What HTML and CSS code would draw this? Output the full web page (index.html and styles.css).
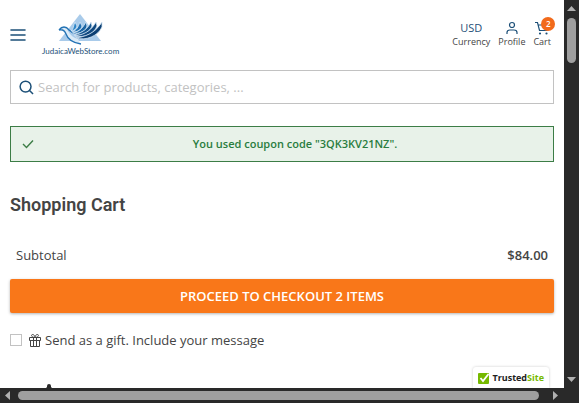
FILE: index.html
```html
<!DOCTYPE html>
<html lang="en">
<head>
    <meta charset="UTF-8">
    <meta name="viewport" content="width=device-width, initial-scale=1.0">
    <title>Shopping Cart</title>
    <link rel="stylesheet" href="styles.css">
</head>
<body>
    <div class="page">
        <header class="header">
            <button class="menu-toggle" type="button" aria-label="Menu">
                <svg width="16" height="12" viewBox="0 0 16 12"><path d="M1 1h14M1 6h14M1 11h14" stroke="#1d5078" stroke-width="1.600" stroke-linecap="round"/></svg>
            </button>
            <a class="logo" href="#">
                <svg width="46" height="31" viewBox="0 0 46 31">
                    <path d="M22 0L43 27H1z" fill="#a9cbea"/>
                    <path d="M1 15C4 12 8 13 10 17C12 21 16 24 20 25L22 29C14 28 10 24 8 19C7 16 4 15 1 15z" fill="#dcebf7"/>
                    <path d="M1 16C4 12 8 12 11 16C13 18 15 19 18 20M1 16C5 15 7 17 8 20C10 26 16 29 23 30" fill="none" stroke="#2272b4" stroke-width="1.300"/>
                    <g stroke="#d5e7f6" stroke-width=".8">
                        <path d="M17 8L19 12C18 15 17 16 13 17C16 15 15 12 17 8z" fill="#2f86c8"/>
                        <path d="M22 8L24 12C23 16 20 18 14 18C19 16 20 13 22 8z" fill="#2272b4"/>
                        <path d="M28 8L29 12C28 17 23 20 15 19C23 17 25 13 28 8z" fill="#1b65a3"/>
                        <path d="M33 8L34 12C32 18 25 22 16 21C26 18 30 14 33 8z" fill="#155690"/>
                        <path d="M38 8L39 12C36 20 27 24 17 22C29 20 34 15 38 8z" fill="#0f4880"/>
                        <path d="M44 8L44 13C40 22 28 27 18 24C32 22 39 16 44 8z" fill="#0b3f73"/>
                    </g>
                </svg>
                <span class="logo-text">JudaicaWebStore.com</span>
            </a>
            <nav class="tools">
                <a class="tool" href="#"><span class="tool-icon">USD</span>Currency</a>
                <a class="tool" href="#">
                    <span class="tool-icon"><svg width="12" height="14" viewBox="0 0 12 14"><circle cx="6" cy="4" r="2.500"/><path d="M1 13v-1.500C1 9.500 2.500 9 4 9h4c1.500 0 3 .5 3 2.500V13"/></svg></span>
                    Profile
                </a>
                <a class="tool" href="#">
                    <span class="tool-icon"><svg width="14" height="14" viewBox="0 0 14 14"><path d="M0 1.500h2.500l2 8h7.500l1.500-5.500H3.500"/><circle cx="5" cy="12.500" r=".5"/><circle cx="11.500" cy="12.500" r=".5"/></svg><span class="badge">2</span></span>
                    Cart
                </a>
            </nav>
        </header>

        <main class="content">
            <form class="search">
                <svg width="15" height="15" viewBox="0 0 16 16"><circle cx="7" cy="7" r="5.800"/><path d="M11 11l4 4"/></svg>
                <input class="search-input" type="search" aria-label="Search" placeholder="Search for products, categories, ...">
            </form>

            <div class="notice" role="status">
                <svg width="12" height="10" viewBox="0 0 12 10"><path d="M1 5l3.500 3.500L11 1.500"/></svg>
                <span class="notice-text">You used coupon code "3QK3KV21NZ".</span>
            </div>

            <h1 class="title">Shopping Cart</h1>

            <div class="subtotal">
                <span>Subtotal</span>
                <span class="price">$84.00</span>
            </div>
            <button class="checkout" type="button">PROCEED TO CHECKOUT 2 ITEMS</button>

            <div class="gift">
                <input class="gift-check" type="checkbox" id="gift">
                <label class="gift-label" for="gift">
                    <svg width="12" height="13" viewBox="0 0 12 13"><path d="M.5 3.500h11v3H.5zM1.500 6.500v6h9v-6M4.500 3.500v9M7.500 3.500v9M6 3.500C2 3.500 2 .5 3.500 .5S6 2 6 3.500C6 2 7 .5 8.500 .5S10 3.500 6 3.500z"/></svg>
                    Send as a gift. Include your message
                </label>
            </div>

            <!-- top of the first product picture -->
            <svg class="product" width="80" height="40" viewBox="0 0 80 40"><path d="M37 3V2a2 2 0 0 1 4 0v1l4 4v33H33V7z" fill="#292929"/></svg>
        </main>

        <a class="trusted" href="#">
            <svg width="12" height="12" viewBox="0 0 12 12"><rect y="1" width="11" height="11" rx="1" fill="#76b900"/><path d="M2.500 6l2.500 3 5.500-7" fill="none" stroke="#fff" stroke-width="1.800"/></svg>
            <span>Trusted<span class="trusted-site">Site</span></span>
        </a>
    </div>

    <div class="scrollbar scrollbar-y">
        <svg width="9" height="5" viewBox="0 0 9 5"><path d="M0 5l4.500-5L9 5z"/></svg>
        <div class="thumb thumb-y"></div>
        <svg class="arrow-end" width="9" height="5" viewBox="0 0 9 5"><path d="M0 0h9L4.500 5z"/></svg>
    </div>
    <div class="scrollbar scrollbar-x">
        <svg width="5" height="9" viewBox="0 0 5 9"><path d="M5 0v9L0 4.500z"/></svg>
        <div class="thumb thumb-x"></div>
        <svg width="5" height="9" viewBox="0 0 5 9"><path d="M0 0v9l5-4.500z"/></svg>
    </div>
</body>
</html>
```
FILE: styles.css
```css
* {
    box-sizing: border-box;
}
body {
    display: grid;
    grid-template-columns: 1fr 15px;
    grid-template-rows: 1fr 15px;
    height: 100vh;
    margin: 0;
    overflow: hidden;
    background: #292929;
    color: #444;
    font-family: "Open Sans", sans-serif;
    font-size: 13px;
    line-height: 18px;
}
svg {
    flex: none;
    display: block;
}
a {
    color: inherit;
    text-decoration: none;
}
.page {
    position: relative;
    overflow: hidden;
    background: #fff;
}

/* header */
.header {
    display: flex;
    align-items: center;
    height: 70px;
    padding: 0 10px;
}
.menu-toggle {
    padding: 0;
    border: 0;
    background: none;
}
.logo {
    display: flex;
    flex-direction: column;
    align-items: center;
    margin-left: 16px;
}
.logo-text {
    color: #1d5078;
    font-family: Lato, sans-serif;
    font-size: 8px;
    line-height: 12px;
}
.tools {
    display: flex;
    gap: 8px;
    margin-left: auto;
    padding-right: 3px;
}
.tool {
    display: flex;
    flex-direction: column;
    align-items: center;
    font-size: 9px;
    line-height: 14px;
}
.tool-icon {
    position: relative;
    display: flex;
    align-items: center;
    height: 14px;
    color: #1d5078;
    font-size: 11px;
}
.tool-icon svg,
.search svg {
    fill: none;
    stroke: #1d5078;
    stroke-width: 1.2;
}
.search svg {
    stroke-width: 1.6;
}
.badge {
    position: absolute;
    top: -4px;
    left: 6px;
    width: 14px;
    height: 14px;
    border-radius: 50%;
    background: #f26a1b;
    color: #fff;
    font-size: 8px;
    font-weight: 600;
    text-align: center;
}

/* content */
.content {
    padding: 0 10px;
}
.search {
    display: flex;
    align-items: center;
    gap: 4px;
    height: 34px;
    padding: 0 8px;
    border: 1px solid #c2c2c2;
}
.search-input {
    flex: 1;
    min-width: 0;
    padding: 0;
    border: 0;
    outline: 0;
    background: none;
    color: #444;
    font: inherit;
}
.search-input::placeholder {
    color: #c2c2c2;
}
.notice {
    display: flex;
    align-items: center;
    gap: 14px;
    height: 36px;
    margin-top: 22px;
    padding: 0 11px;
    border: 1px solid #3c7d46;
    background: #e8f2e9;
    color: #2a7d3f;
    font-size: 11px;
    font-weight: 600;
}
.notice svg {
    fill: none;
    stroke: #3c7d46;
    stroke-width: 1.4;
}
.notice-text {
    flex: 1;
    text-align: center;
}
.title {
    margin: 32px 0 0;
    font-family: Roboto, sans-serif;
    font-size: 18px;
    font-weight: 600;
    line-height: 22px;
}
.subtotal {
    display: flex;
    justify-content: space-between;
    margin: 30px 0 15px;
    padding: 0 6px;
}
.price {
    font-weight: 600;
}
.checkout {
    display: block;
    width: 100%;
    height: 34px;
    border: 0;
    border-radius: 2px;
    background: #f97719;
    box-shadow: 0 1px 3px rgba(0, 0, 0, 0.3);
    color: #fff;
    font: 600 13px "Open Sans", sans-serif;
}
.gift {
    display: flex;
    align-items: center;
    gap: 7px;
    margin-top: 18px;
}
.gift-check {
    appearance: none;
    width: 12px;
    height: 12px;
    margin: 0;
    border: 1px solid #c2c2c2;
    background: #fff;
}
.gift-check:checked {
    background: #1d5078;
}
.gift-label {
    display: flex;
    align-items: center;
    gap: 4px;
}
.gift-label svg {
    fill: none;
    stroke: #444;
}
.product {
    margin-top: 35px;
}
.trusted {
    position: absolute;
    right: 15px;
    bottom: 0;
    display: flex;
    align-items: center;
    gap: 2px;
    height: 21px;
    padding: 0 5px;
    border-radius: 3px 3px 0 0;
    background: #fff;
    box-shadow: 0 0 3px rgba(0, 0, 0, 0.2);
    color: #222;
    font-size: 9px;
    font-weight: 700;
}
.trusted-site {
    color: #76b900;
}

/* scrollbars */
.scrollbar {
    display: flex;
    align-items: center;
    background: #292929;
}
.scrollbar svg {
    fill: #b0b0b0;
}
.scrollbar-y {
    flex-direction: column;
    padding: 6px 0;
}
.scrollbar-x {
    gap: 8px;
    padding: 0 6px 0 5px;
}
.thumb {
    border-radius: 5px;
    background: #9f9f9f;
}
.thumb-y {
    width: 9px;
    height: 12%;
    margin-top: 7px;
}
.arrow-end {
    margin-top: auto;
}
.thumb-x {
    flex: 1;
    height: 9px;
    margin-right: 6px;
}
```
